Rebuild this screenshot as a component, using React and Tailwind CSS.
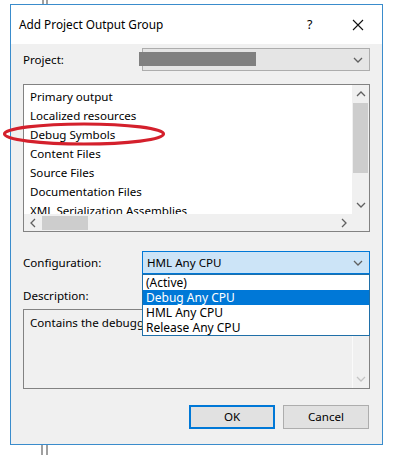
import React from "react";

const font = { fontFamily: '"Noto Sans", "Open Sans", Arial, sans-serif' };

function Chevron({ dir = "down", color = "#606060", className = "" }) {
  const paths = {
    down: "M1 3 L5 7 L9 3",
    up: "M1 7 L5 3 L9 7",
    left: "M7 1 L3 5 L7 9",
    right: "M3 1 L7 5 L3 9",
  };
  return (
    <svg width="10" height="10" viewBox="0 0 10 10" className={className}>
      <path d={paths[dir]} fill="none" stroke={color} strokeWidth="1.3" />
    </svg>
  );
}

const outputs = [
  "Primary output",
  "Localized resources",
  "Debug Symbols",
  "Content Files",
  "Source Files",
  "Documentation Files",
  "XML Serialization Assemblies",
];

const configs = ["(Active)", "Debug Any CPU", "HML Any CPU", "Release Any CPU"];

export default function App() {
  return (
    <div
      className="relative w-[393px] h-[455px] bg-white text-[11.6px] text-black overflow-hidden"
      style={font}
    >
      {/* window behind the dialog */}
      <div className="absolute left-[42px] top-0 h-[4px] w-[6px] border-x-2 border-[#a0a0a0]" />
      <div className="absolute left-[41px] top-[445px] h-[10px] w-[7px] border-x-2 border-[#a0a0a0]" />

      <div className="absolute left-[10px] top-[4px] w-[373px] h-[441px] border border-[#3a8ccc] flex flex-col">
        {/* title bar */}
        <div className="h-[39px] bg-white flex items-center pl-[8px] shrink-0">
          <span className="flex-1 text-[11.8px] pt-[1px]">Add Project Output Group</span>
          <span className="w-[14px] text-[12.5px] mr-[31px] pt-[1px]">?</span>
          <svg width="12" height="12" viewBox="0 0 12 12" className="mr-[18px]">
            <path d="M1 1 L11 11 M11 1 L1 11" stroke="#111" strokeWidth="1.1" />
          </svg>
        </div>

        {/* body */}
        <div className="relative flex-1 bg-[#f0f0f0] pl-[12px] pr-[12px] pt-[4px] flex flex-col">
          {/* Project row */}
          <div className="flex items-center h-[23px]">
            <span className="w-[119px]">Project:</span>
            <div className="relative flex-1 h-[23px] border border-[#adadad] bg-[#e5e5e5] flex items-center justify-end pr-[6px]">
              <div className="absolute left-[-4px] top-[3px] w-[117px] h-[14px] bg-[#808080]" />
              <Chevron />
            </div>
          </div>

          {/* output list */}
          <div className="mt-[13px] h-[148px] border border-[#828282] bg-white flex flex-col">
            <div className="flex flex-1 min-h-0">
              <div className="flex-1 overflow-hidden pt-[2px] pl-[6px]">
                {outputs.map((o) => (
                  <div key={o} className="h-[19px] leading-[19px] whitespace-nowrap">
                    {o}
                  </div>
                ))}
              </div>
              <div className="w-[17px] bg-[#f0f0f0] flex flex-col items-center">
                <div className="h-[18px] flex items-center justify-center">
                  <Chevron dir="up" />
                </div>
                <div className="w-[15px] h-[70px] bg-[#cdcdcd]" />
                <div className="flex-1" />
                <div className="h-[18px] flex items-center justify-center">
                  <Chevron dir="down" />
                </div>
              </div>
            </div>
            <div className="h-[17px] flex">
              <div className="flex-1 bg-[#f0f0f0] flex items-center">
                <div className="w-[17px] flex justify-center">
                  <Chevron dir="left" />
                </div>
                <div className="w-[46px] h-[14px] bg-[#cdcdcd] ml-[1px]" />
                <div className="flex-1" />
                <div className="w-[17px] flex justify-center">
                  <Chevron dir="right" />
                </div>
              </div>
              <div className="w-[17px] bg-[#f0f0f0]" />
            </div>
          </div>

          {/* Configuration row */}
          <div className="relative mt-[19px] flex items-center h-[23px]">
            <span className="w-[119px]">Configuration:</span>
            <div className="flex-1 h-[23px] border border-[#0078d7] bg-[#cce4f7] flex items-center pl-[4px] pr-[6px]">
              <span className="flex-1">HML Any CPU</span>
              <Chevron />
            </div>

            {/* open dropdown */}
            <div className="absolute left-[119px] right-0 top-[23px] h-[62px] bg-white border border-[#1f6fa8] z-10">
              {configs.map((c, i) => (
                <div
                  key={c}
                  className={`h-[15px] leading-[15px] pl-[3px] text-[12px] ${
                    i === 1 ? "bg-[#0078d7] text-white" : ""
                  }`}
                >
                  {c}
                </div>
              ))}
            </div>
          </div>

          {/* Description */}
          <div className="mt-[14px] h-[16px] leading-[16px]">Description:</div>
          <div className="mt-[5px] h-[80px] border border-[#828282] bg-[#f0f0f0] flex">
            <div className="flex-1 pl-[6px] pt-[4px] whitespace-nowrap overflow-hidden">
              Contains the debugging files for the project.
            </div>
            <div className="w-[17px] border-l border-[#fafafa] flex flex-col justify-end items-center pb-[4px]">
              <Chevron color="#c4c4c4" />
            </div>
          </div>

          {/* Buttons */}
          <div className="mt-[16px] flex justify-end gap-[8px] pr-[1px]">
            <button className="w-[86px] h-[24px] border-2 border-[#0078d7] bg-[#e1e1e1]">
              OK
            </button>
            <button className="w-[86px] h-[24px] border border-[#adadad] bg-[#e1e1e1]">
              Cancel
            </button>
          </div>
        </div>
      </div>

      {/* red annotation ellipse */}
      <svg
        className="absolute left-[2px] top-[121px] pointer-events-none"
        width="164"
        height="26"
        viewBox="0 0 164 26"
      >
        <ellipse cx="82" cy="13" rx="79.5" ry="10" fill="none" stroke="#d4202c" strokeWidth="3.2" />
      </svg>
    </div>
  );
}
